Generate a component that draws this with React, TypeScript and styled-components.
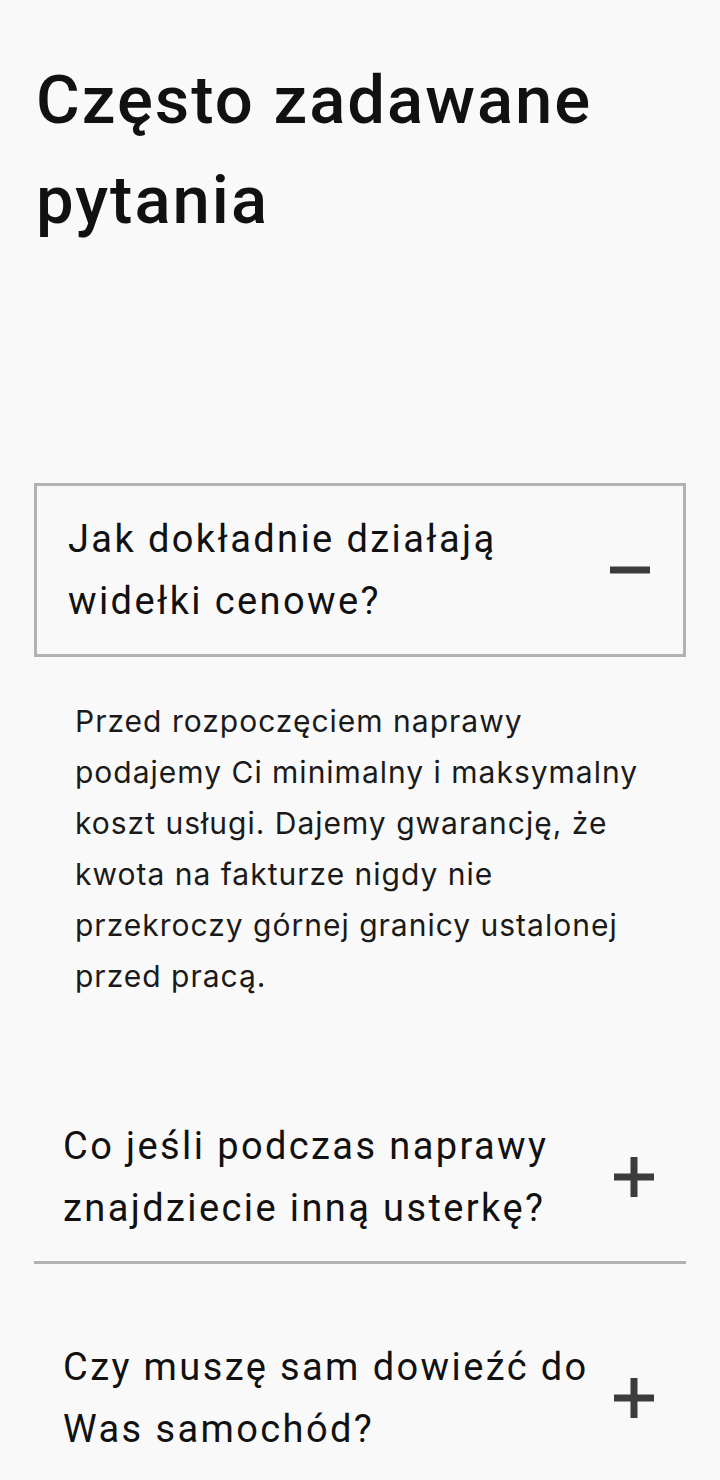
import React, { useState } from "react";
import styled, { createGlobalStyle } from "styled-components";

const Global = createGlobalStyle`
  html, body { margin: 0; padding: 0; background: #f9f9f9; }
  body { font-family: Inter, "Noto Sans", sans-serif; color: #111; }
`;

const Page = styled.main`
  padding: 50px 34px 40px 34px;
  display: flex;
  flex-direction: column;
`;

const Title = styled.h1`
  margin: 0 0 233px 2px;
  font-family: Roboto, "Noto Sans", sans-serif;
  font-weight: 500;
  font-size: 67px;
  line-height: 100px;
  letter-spacing: 2px;
  color: #111;
  max-width: 600px;
`;

const List = styled.div`
  display: flex;
  flex-direction: column;
`;

const Item = styled.section`
  margin-bottom: 50px;
`;

const Header = styled.button<{ $open: boolean }>`
  all: unset;
  box-sizing: border-box;
  width: 100%;
  display: flex;
  align-items: center;
  justify-content: space-between;
  gap: 20px;
  cursor: pointer;
  padding: ${(p) => (p.$open ? "22px 33px 22px 31px" : "22px 32px 22px 29px")};
  border: ${(p) => (p.$open ? "3px solid #b3b3b3" : "none")};
  border-bottom: 3px solid #b3b3b3;
`;

const Question = styled.span`
  font-family: Roboto, "Noto Sans", sans-serif;
  font-weight: 400;
  font-size: 38px;
  line-height: 62px;
  letter-spacing: 2.4px;
  color: #111;
  max-width: 540px;
`;

const Answer = styled.p`
  margin: 0;
  padding: 39px 34px 41px 41px;
  font-family: Inter, "Noto Sans", sans-serif;
  font-size: 30px;
  line-height: 51px;
  letter-spacing: 1px;
  color: #1a1a1a;
`;

const IconBox = styled.span`
  flex: none;
  width: 40px;
  height: 40px;
  display: flex;
  align-items: center;
  justify-content: center;
`;

const Sign = ({ open }: { open: boolean }) => (
  <IconBox>
    <svg width="40" height="40" viewBox="0 0 40 40">
      <rect x="0" y="16.5" width="40" height="7" fill="#3c3c3c" />
      {!open && <rect x="16.5" y="0" width="7" height="40" fill="#3c3c3c" />}
    </svg>
  </IconBox>
);

const faqs = [
  {
    q: "Jak dokładnie działają widełki cenowe?",
    a: "Przed rozpoczęciem naprawy podajemy Ci minimalny i maksymalny koszt usługi. Dajemy gwarancję, że kwota na fakturze nigdy nie przekroczy górnej granicy ustalonej przed pracą.",
  },
  {
    q: "Co jeśli podczas naprawy znajdziecie inną usterkę?",
    a: "Zawsze informujemy Cię o każdej dodatkowej usterce i nie wykonujemy żadnych prac bez Twojej zgody.",
  },
  {
    q: "Czy muszę sam dowieźć do Was samochód?",
    a: "Nie, możemy odebrać samochód spod Twojego domu i odwieźć go po naprawie.",
  },
];

export default function App() {
  const [open, setOpen] = useState(0);
  return (
    <>
      <Global />
      <Page>
        <Title>Często zadawane pytania</Title>
        <List>
          {faqs.map((f, i) => (
            <Item key={i}>
              <Header $open={open === i} onClick={() => setOpen(open === i ? -1 : i)}>
                <Question>{f.q}</Question>
                <Sign open={open === i} />
              </Header>
              {open === i && <Answer>{f.a}</Answer>}
            </Item>
          ))}
        </List>
      </Page>
    </>
  );
}
